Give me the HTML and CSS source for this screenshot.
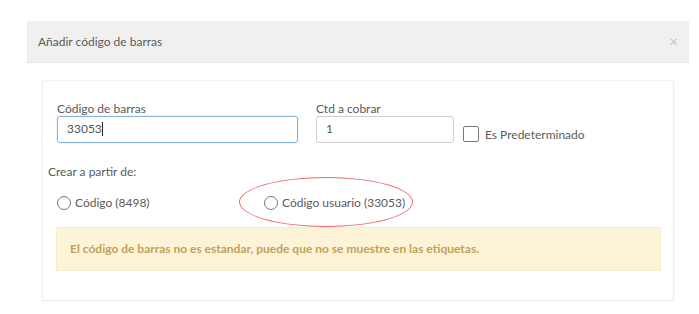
FILE: index.html
```html
<!DOCTYPE html>
<html lang="es">
<head>
  <meta charset="UTF-8">
  <title>Añadir código de barras</title>
  <link rel="stylesheet" href="styles.css">
</head>
<body>

<div class="modal">
  <div class="modal-header">
    <span class="modal-title">Añadir código de barras</span>
    <span class="close">&times;</span>
  </div>

  <div class="card">
    <div class="row">
      <div class="field field-code">
        <label for="code">Código de barras</label>
        <div class="input focus" id="code">33053<span class="caret"></span></div>
      </div>
      <div class="field field-qty">
        <label for="qty">Ctd a cobrar</label>
        <div class="input" id="qty">1</div>
      </div>
      <div class="check">
        <span class="box"></span>
        <span>Es Predeterminado</span>
      </div>
    </div>

    <div class="source-label">Crear a partir de:</div>
    <div class="radios">
      <div class="radio radio-first">
        <span class="dot"></span>
        <span>Código (8498)</span>
      </div>
      <div class="radio radio-user">
        <span class="dot"></span>
        <span>Código usuario (33053)</span>
        <span class="mark"></span>
      </div>
    </div>

    <div class="alert">El código de barras no es estandar, puede que no se muestre en las etiquetas.</div>
  </div>
</div>

</body>
</html>
```

FILE: styles.css
```css
body {
  margin: 0;
  background: #fff;
  font-family: Lato, "Open Sans", sans-serif;
  font-size: 12px;
  color: #5a5a5a;
}
.modal {
  width: 662px;
  margin: 21px 0 0 27px;
}
.modal-header {
  height: 42px;
  background: #f0f0f0;
  border-bottom: 1px solid #e4e4e4;
  box-sizing: border-box;
  display: flex;
  align-items: center;
  justify-content: space-between;
  padding: 0 11px 0 11px;
}
.close {
  color: #c4c4c4;
  font-size: 15px;
  margin-top: -2px;
}
.card {
  margin: 17px 15px 0 15px;
  padding: 20px 12px 29px 13px;
  border-top: 1px solid #f4f4f4;
  border-left: 1px solid #f0f0f0;
  border-right: 1px solid #eeeeee;
  border-bottom: 1px solid #ececec;
  box-shadow: 0 1px 2px rgba(0,0,0,0.06);
}
.row {
  display: flex;
  align-items: flex-end;
}
.field label {
  display: block;
  line-height: 15px;
}
.input {
  height: 27px;
  box-sizing: border-box;
  border: 1px solid #cfcfcf;
  border-radius: 3px;
  padding: 0 9px;
  line-height: 24px;
  color: #555;
}
.focus {
  border-color: #8ab4dc;
  box-shadow: 0 0 2px rgba(102,160,220,0.4);
}
.caret {
  display: inline-block;
  width: 1px;
  height: 14px;
  background: #222;
  vertical-align: -3px;
}
.field-code {
  width: 241px;
  margin-left: 1px;
}
.field-qty {
  width: 138px;
  margin-left: 18px;
}
.check {
  display: flex;
  align-items: center;
  margin-left: 9px;
  margin-bottom: 1px;
  height: 16px;
}
.box {
  width: 14px;
  height: 14px;
  border: 1px solid #777;
  border-radius: 2px;
  margin-right: 6px;
}
.source-label {
  margin-top: 21px;
  line-height: 15px;
  margin-left: -8px;
}
.radios {
  display: flex;
  margin-top: 16px;
  height: 15px;
  align-items: center;
}
.radio {
  display: flex;
  align-items: center;
  position: relative;
}
.radio-first {
  margin-left: 1px;
  width: 207px;
}
.dot {
  width: 12px;
  height: 12px;
  border: 1px solid #777;
  border-radius: 50%;
  margin-right: 4px;
}
.mark {
  position: absolute;
  left: -25px;
  top: -18px;
  width: 172px;
  height: 48px;
  border: 1px solid #f06b6b;
  border-radius: 50%;
}
.alert {
  margin-top: 17px;
  height: 44px;
  box-sizing: border-box;
  background: #fdf4d7;
  border: 1px solid #f7ecc8;
  color: #c4a05a;
  font-weight: bold;
  padding: 0 13px;
  line-height: 42px;
}
```
